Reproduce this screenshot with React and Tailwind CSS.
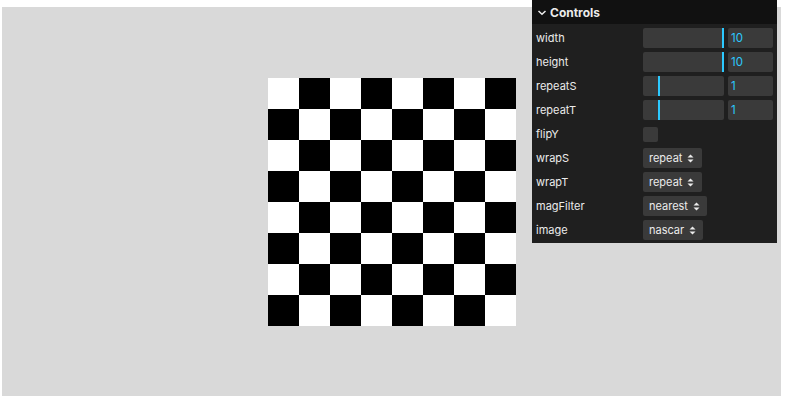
import { useState } from 'react'

const numbers = [
  { name: 'width', value: '10', pct: 100 },
  { name: 'height', value: '10', pct: 100 },
  { name: 'repeatS', value: '1', pct: 20 },
  { name: 'repeatT', value: '1', pct: 20 },
]

const selects = [
  { name: 'wrapS', value: 'repeat', w: 'w-[59px]' },
  { name: 'wrapT', value: 'repeat', w: 'w-[59px]' },
  { name: 'magFilter', value: 'nearest', w: 'w-[64px]' },
  { name: 'image', value: 'nascar', w: 'w-[60px]' },
]

function Arrows() {
  return (
    <svg width="7" height="9" viewBox="0 0 7 9" className="ml-[5px]">
      <path d="M3.5 0.5 L6.5 3.5 H0.5 Z" fill="#ebebeb" />
      <path d="M3.5 8.5 L6.5 5.5 H0.5 Z" fill="#ebebeb" />
    </svg>
  )
}

function Row({ name, children }) {
  return (
    <div className="flex h-6 items-center">
      <div className="w-[107px] pt-px text-[11px] text-[#ebebeb]">{name}</div>
      <div className="flex flex-1 items-center">{children}</div>
    </div>
  )
}

export default function App() {
  const [open] = useState(true)
  const squares = Array.from({ length: 64 })

  return (
    <div className="relative h-[406px] w-[787px] bg-white pl-[2px] pt-[7px] font-['Inter',sans-serif]">
      <div className="flex h-[389px] w-[779px] items-center justify-center bg-[#d9d9d9]">
        <div className="grid grid-cols-8">
          {squares.map((_, i) => {
            const r = Math.floor(i / 8)
            const c = i % 8
            return (
              <div key={i} className={(r + c) % 2 === 0 ? 'h-[31px] w-[31px] bg-white' : 'h-[31px] w-[31px] bg-black'} />
            )
          })}
        </div>
      </div>

      <div className="absolute left-[532px] top-0 w-[245px] bg-[#1f1f1f] pb-px">
        <div className="flex h-6 items-center bg-[#111111] pl-[5px] pt-px text-[12px] font-bold text-[#ebebeb]">
          <svg width="10" height="9" viewBox="0 0 10 9" className="mr-[3px]">
            <path d="M1.5 3 L5 6.3 L8.5 3" fill="none" stroke="#ebebeb" strokeWidth="1.5" />
          </svg>
          Controls
        </div>
        {open && (
          <div className="pl-1 pr-1 pt-[2px]">
            {numbers.map((n) => (
              <Row key={n.name} name={n.name}>
                <div className="relative h-5 w-[81px] rounded-[2px] bg-[#3a3a3a]">
                  <div
                    className="absolute top-0 h-5 w-[2px] bg-[#2cc9ff]"
                    style={{ left: n.pct === 100 ? 79 : 15 }}
                  />
                </div>
                <div className="ml-1 flex h-5 w-[45px] items-center rounded-[2px] bg-[#3a3a3a] pl-[3px] pt-px text-[11.5px] text-[#2cc9ff]">
                  {n.value}
                </div>
              </Row>
            ))}
            <Row name="flipY">
              <div className="h-[15px] w-[15px] rounded-[2px] bg-[#3a3a3a]" />
            </Row>
            {selects.map((s) => (
              <Row key={s.name} name={s.name}>
                <div className={`flex h-5 items-center rounded-[2px] bg-[#3a3a3a] pl-[6px] pt-px text-[11px] text-[#ebebeb] ${s.w}`}>
                  {s.value}
                  <Arrows />
                </div>
              </Row>
            ))}
          </div>
        )}
      </div>
    </div>
  )
}
